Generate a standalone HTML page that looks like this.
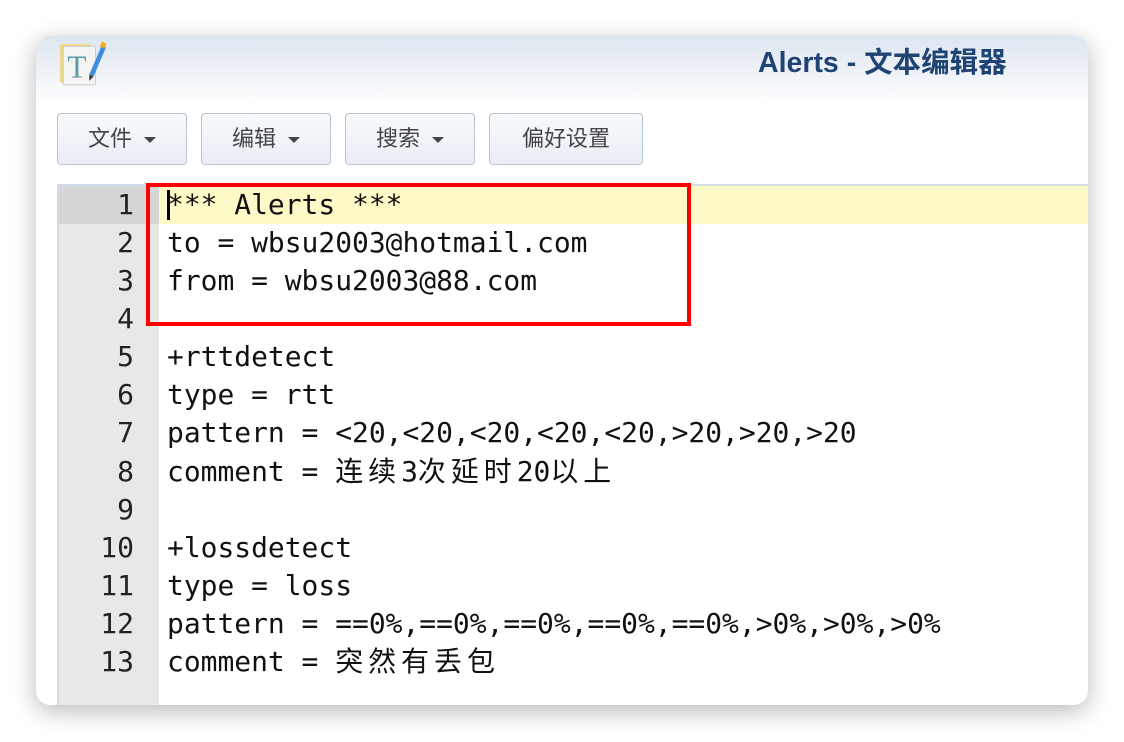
<!DOCTYPE html>
<html><head><meta charset="utf-8"><style>
body{margin:0;width:1124px;height:742px;background:#fff;position:relative;overflow:hidden;font-family:"Liberation Sans","Noto Sans CJK SC",sans-serif}
.win{position:absolute;left:36px;top:36px;width:1052px;height:669px;border-radius:14px;background:#fff;box-shadow:0 6px 24px rgba(0,0,0,.28);overflow:hidden}
.hdr{position:absolute;left:0;top:0;width:100%;height:70px;background:linear-gradient(#dde5ef,#fff)}
.title{position:absolute;left:722px;top:9px;font-size:28.5px;font-weight:bold;color:#1f4474;font-family:"Liberation Sans","Noto Sans CJK SC",sans-serif;line-height:36px}
.btn{position:absolute;top:77px;height:52px;border:1.5px solid #b9c4d1;border-radius:4px;background:linear-gradient(#f7f9fc,#e9eef5);box-sizing:border-box;font-size:22px;color:#444;text-align:center;line-height:50px}
.car{display:inline-block;width:0;height:0;border-left:6px solid transparent;border-right:6px solid transparent;border-top:6px solid #444;vertical-align:middle;margin-left:12px}
.ed{position:absolute;left:21px;top:148px;width:1031px;height:521px;border-top:2px solid #d2dbe6;border-left:2px solid #d2dbe6}
.gut{position:absolute;left:0;top:0;width:100px;height:100%;background:#e8e8e8}
.hl{position:absolute;left:0;top:0;width:100%;height:38px;background:#fefac7}
.hlg{position:absolute;left:0;top:0;width:100px;height:38px;background:#d6d6d6}
.ln{position:absolute;left:0;width:75px;text-align:right;font:28px/36px "DejaVu Sans Mono",monospace;color:#222}
.tx{position:absolute;left:108px;top:0;font:27.95px/36px "DejaVu Sans Mono","Noto Sans CJK SC",monospace;color:#111;white-space:pre;height:36px}
.cj{letter-spacing:5px}
.red{position:absolute;left:146px;top:183px;width:545px;height:143px;border:4px solid #f00;box-sizing:border-box}
</style></head><body>
<div class="win">
<div class="hdr"></div>
<svg style="position:absolute;left:22px;top:3px" width="48" height="48" viewBox="0 0 46 46">
<rect x="2" y="5" width="30" height="37" rx="2" fill="#f0d77a"/>
<rect x="5" y="7" width="31" height="37" rx="2" fill="#f4f4f2" stroke="#ccc"/>
<text x="9" y="37" font-family="Liberation Serif,serif" font-size="30" fill="#5c9aa8">T</text>
<path d="M30 34 L42 6 L46 8 L34 36 Z" fill="#3c8de0"/><path d="M30 34 L34 36 L30 40 Z" fill="#333"/><rect x="41" y="3" width="5" height="5" fill="#f2b01e" transform="rotate(22 43 5)"/>
</svg>
<div class="title">Alerts - 文本编辑器</div>
<div class="btn" style="left:21px;width:130px">文件<span class="car"></span></div>
<div class="btn" style="left:165px;width:130px">编辑<span class="car"></span></div>
<div class="btn" style="left:309px;width:130px">搜索<span class="car"></span></div>
<div class="btn" style="left:453px;width:154px">偏好设置</div>
<div class="ed">
<div class="gut"></div><div class="hl"></div><div class="hlg"></div>
<div style="position:absolute;left:108px;top:4px;width:3px;height:30px;background:#000"></div>
<div class="ln" style="top:1px">1</div><div class="tx" style="top:1px">*** Alerts ***</div>
<div class="ln" style="top:39px">2</div><div class="tx" style="top:39px">to = wbsu2003@hotmail.com</div>
<div class="ln" style="top:77px">3</div><div class="tx" style="top:77px">from = wbsu2003@88.com</div>
<div class="ln" style="top:115px">4</div>
<div class="ln" style="top:153px">5</div><div class="tx" style="top:153px">+rttdetect</div>
<div class="ln" style="top:191px">6</div><div class="tx" style="top:191px">type = rtt</div>
<div class="ln" style="top:229px">7</div><div class="tx" style="top:229px">pattern = &lt;20,&lt;20,&lt;20,&lt;20,&lt;20,&gt;20,&gt;20,&gt;20</div>
<div class="ln" style="top:268px">8</div><div class="tx" style="top:268px">comment = <span class="cj">连续</span>3<span class="cj">次延时</span>20<span class="cj">以上</span></div>
<div class="ln" style="top:306px">9</div>
<div class="ln" style="top:344px">10</div><div class="tx" style="top:344px">+lossdetect</div>
<div class="ln" style="top:382px">11</div><div class="tx" style="top:382px">type = loss</div>
<div class="ln" style="top:420px">12</div><div class="tx" style="top:420px">pattern = ==0%,==0%,==0%,==0%,==0%,&gt;0%,&gt;0%,&gt;0%</div>
<div class="ln" style="top:458px">13</div><div class="tx" style="top:458px">comment = <span class="cj">突然有丢包</span></div>
</div>
</div>
<div class="red"></div>
</body></html>
